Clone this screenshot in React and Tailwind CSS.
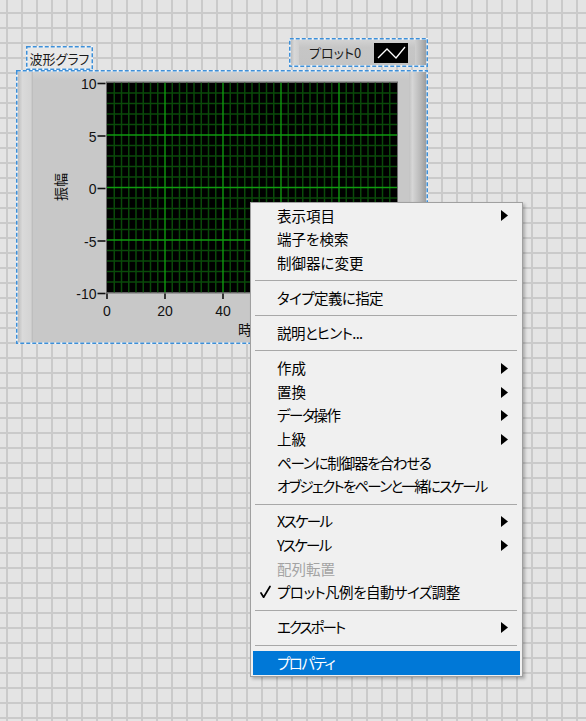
import React from "react";

function Dashed({ w, h }) {
  return (
    <svg className="absolute left-0 top-0 pointer-events-none" width={w} height={h}>
      <rect x="0.75" y="0.75" width={w - 1.5} height={h - 1.5} fill="none" stroke="#f4f8fc" strokeWidth="1.5" />
      <rect x="0.75" y="0.75" width={w - 1.5} height={h - 1.5} fill="none" stroke="#3d8fd8" strokeWidth="1.5" strokeDasharray="4 2" />
    </svg>
  );
}

function Plot() {
  const x0 = 74, y0 = 10.5, W = 290, H = 210;
  const vx = [], hy = [];
  for (let i = 1; i < 40; i++) vx.push({ x: x0 + (W * i) / 40, major: i % 8 === 0 });
  for (let i = 1; i < 20; i++) hy.push({ y: y0 + (H * i) / 20, major: i % 5 === 0 });
  const yl = ["10", "5", "0", "-5", "-10"];
  const xl = ["0", "20", "40"];
  const font = "'Liberation Sans', Arial, sans-serif";
  return (
    <svg width="376" height="270" className="absolute left-0 top-0">
      <rect x={x0} y={y0} width={W} height={H} fill="#000" />
      {vx.filter(v => !v.major).map((v, i) => (
        <line key={"v" + i} x1={v.x} y1={y0} x2={v.x} y2={y0 + H} stroke="#0a4a0a" strokeWidth="1.5" />
      ))}
      {hy.filter(v => !v.major).map((v, i) => (
        <line key={"h" + i} x1={x0} y1={v.y} x2={x0 + W} y2={v.y} stroke="#0a4a0a" strokeWidth="1.5" />
      ))}
      {vx.filter(v => v.major).map((v, i) => (
        <line key={"V" + i} x1={v.x} y1={y0} x2={v.x} y2={y0 + H} stroke="#0f9a0f" strokeWidth="1.4" />
      ))}
      {hy.filter(v => v.major).map((v, i) => (
        <line key={"H" + i} x1={x0} y1={v.y} x2={x0 + W} y2={v.y} stroke="#0f9a0f" strokeWidth="1.4" />
      ))}
      <rect x={x0 - 0.5} y={y0 - 0.5} width={W + 1} height={H + 1} fill="none" stroke="#6a6a6a" strokeWidth="1" />
      {yl.map((t, i) => {
        const y = y0 + (H * i) / 4;
        return (
          <g key={"yl" + i}>
            <line x1="64.5" y1={y + 1} x2="72.5" y2={y + 1} stroke="#111" strokeWidth="1.6" />
            <text x="63.5" y={y + 1.5} textAnchor="end" dominantBaseline="central" fontFamily={font} fontSize="14" fill="#111">{t}</text>
          </g>
        );
      })}
      {[0, 1, 2, 3, 4, 5].map((i) => (
        <line key={"xt" + i} x1={x0 + 58 * i} y1="221.5" x2={x0 + 58 * i} y2="227" stroke="#111" strokeWidth="1.6" />
      ))}
      {xl.map((t, i) => (
        <text key={"xl" + i} x={x0 + 58 * i} y="238.5" textAnchor="middle" dominantBaseline="central" fontFamily={font} fontSize="14" fill="#111">{t}</text>
      ))}
      <text x="219" y="257" textAnchor="middle" dominantBaseline="central" fontFamily="'Noto Sans CJK JP', sans-serif" fontSize="14" fill="#111">時間</text>
      <text x="27" y="115" textAnchor="middle" dominantBaseline="central" fontFamily="'Noto Sans CJK JP', sans-serif" fontSize="14" fill="#111" transform="rotate(-90 27 115)">振幅</text>
    </svg>
  );
}

function Arrow() {
  return (
    <svg width="7" height="11" viewBox="0 0 7 11" className="shrink-0">
      <polygon points="0,0 7,5.5 0,11" fill="#000" />
    </svg>
  );
}

function Check() {
  return (
    <svg width="11" height="14" viewBox="0 0 11 14">
      <path d="M1 8 L3.6 12.2 L10 1.5" fill="none" stroke="#000" strokeWidth="1.7" strokeLinecap="round" strokeLinejoin="round" />
    </svg>
  );
}

function Item({ label, sub, disabled, checked, active, tr }) {
  return (
    <div
      className={
        "flex items-center h-[23.6px] mx-[2px] pr-[12px] " +
        (active ? "bg-[#0078d7] text-white" : disabled ? "text-[#a3a3a3]" : "text-black")
      }
    >
      <div className="w-[24px] h-full flex items-center justify-center shrink-0">{checked ? <Check /> : null}</div>
      <div className={"flex-1 leading-none whitespace-nowrap " + (tr || "")}>{label}</div>
      {sub ? <Arrow /> : null}
    </div>
  );
}

function Sep() {
  return (
    <div className="h-[11.6px] flex items-center ml-[4px] mr-[5px]">
      <div className="h-px w-full bg-[#a8a8a8]" />
    </div>
  );
}

export default function App() {
  const items = [
    { label: "表示項目", sub: true },
    { label: "端子を検索" },
    { label: "制御器に変更" },
    "sep",
    { label: "タイプ定義に指定", tr: "tracking-[-0.6px]" },
    "sep",
    { label: "説明とヒント...", tr: "tracking-[-0.6px]" },
    "sep",
    { label: "作成", sub: true },
    { label: "置換", sub: true },
    { label: "データ操作", sub: true, tr: "tracking-[-1.4px]" },
    { label: "上級", sub: true },
    { label: "ペーンに制御器を合わせる", tr: "tracking-[-1.2px]" },
    { label: "オブジェクトをペーンと一緒にスケール", tr: "tracking-[-1.75px]" },
    "sep",
    { label: "Xスケール", sub: true, tr: "tracking-[-1.7px]" },
    { label: "Yスケール", sub: true, tr: "tracking-[-1.7px]" },
    { label: "配列転置", disabled: true },
    { label: "プロット凡例を自動サイズ調整", checked: true, tr: "tracking-[-0.5px]" },
    "sep",
    { label: "エクスポート", sub: true, tr: "tracking-[-2px]" },
    "sep",
    { label: "プロパティ", active: true, tr: "tracking-[-1.5px]" },
  ];
  return (
    <div className="relative w-[586px] h-[721px] overflow-hidden bg-[#e4e4e4] [background-image:linear-gradient(to_right,#cacaca_2px,transparent_2px),linear-gradient(to_bottom,#cacaca_2px,transparent_2px)] [background-size:15px_15px] [background-position:6px_12px] font-['Noto_Sans_CJK_JP',sans-serif] [font-feature-settings:'palt']">
      {/* graph label */}
      <div className="absolute left-[26px] top-[46px] w-[67px] h-[24px] bg-[#e8e8e8] flex items-center justify-center text-[13px] leading-none text-[#1a1a1a]">
        波形グラフ
        <Dashed w={67} h={24} />
      </div>

      {/* plot legend */}
      <div className="absolute left-[289px] top-[38px] w-[139px] h-[29px] p-[2px]">
        <div className="flex h-full">
          <div className="w-[8px] bg-[linear-gradient(to_right,#bdbdbd,#d8d8d8_40%,#cfcfcf)]" />
          <div className="flex-1 flex items-center bg-[linear-gradient(to_bottom,#d2d2d2,#c6c6c6_30%,#c4c4c4)] pl-[10px] pr-[7px]">
            <span className="flex-1 text-[13px] leading-none text-[#1a1a1a]">プロット0</span>
            <div className="w-[34px] h-[20px] bg-black flex items-center justify-center">
              <svg width="30" height="16" viewBox="0 0 30 16">
                <polyline points="2,13 11,4 20,13 29,2" fill="none" stroke="#fff" strokeWidth="1.3" />
              </svg>
            </div>
          </div>
          <div className="w-[11px] bg-[linear-gradient(to_right,#cfcfcf,#bababa_50%,#9e9e9e)]" />
        </div>
        <Dashed w={139} h={29} />
      </div>

      {/* waveform graph */}
      <div className="absolute left-[16px] top-[70px] w-[412px] h-[274px] p-[2px]">
        <div className="flex h-full">
          <div className="w-[15px] bg-[linear-gradient(to_right,#bebebe,#dadada_30%,#d4d4d4_85%,#b8b8b8)]" />
          <div className="relative flex-1 bg-[linear-gradient(to_bottom,#d0d0d0,#c8c8c8_3%,#c8c8c8)]">
            <Plot />
          </div>
          <div className="w-[17px] bg-[linear-gradient(to_right,#c2c2c2,#d6d6d6_20%,#bababa_65%,#9c9c9c)]" />
        </div>
        <Dashed w={412} h={274} />
      </div>

      {/* context menu */}
      <div className="absolute left-[250px] top-[202px] w-[273px] h-[475px] bg-[#f0f0f0] border border-[#a0a0a0] py-[1px] shadow-[2px_2px_3px_rgba(0,0,0,0.25)] text-[14.5px]">
        {items.map((it, i) => (it === "sep" ? <Sep key={i} /> : <Item key={i} {...it} />))}
      </div>
    </div>
  );
}
